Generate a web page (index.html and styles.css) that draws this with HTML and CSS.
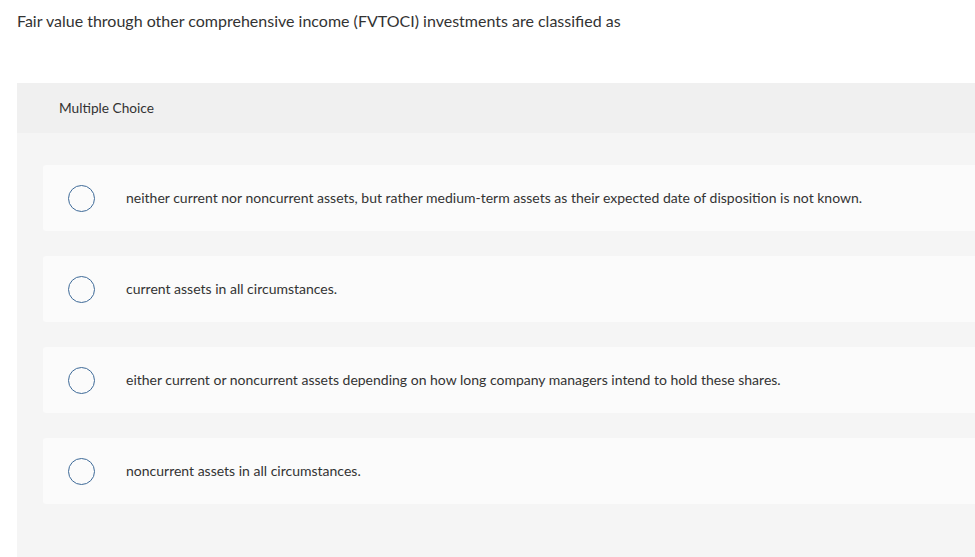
FILE: index.html
```html
<!DOCTYPE html>
<html>
<head>
<meta charset="utf-8">
<link rel="stylesheet" href="styles.css">
</head>
<body>
<div class="page">
  <p class="question">Fair value through other comprehensive income (FVTOCI) investments are classified as</p>
  <div class="panel">
    <div class="panel-header">Multiple Choice</div>
    <div class="options">
      <div class="option"><span class="radio"></span><span class="label">neither current nor noncurrent assets, but rather medium-term assets as their expected date of disposition is not known.</span></div>
      <div class="option"><span class="radio"></span><span class="label">current assets in all circumstances.</span></div>
      <div class="option"><span class="radio"></span><span class="label">either current or noncurrent assets depending on how long company managers intend to hold these shares.</span></div>
      <div class="option"><span class="radio"></span><span class="label">noncurrent assets in all circumstances.</span></div>
    </div>
  </div>
</div>
</body>
</html>
```
FILE: styles.css
```css
html, body {
  margin: 0;
  padding: 0;
  background: #ffffff;
  overflow: hidden;
}
body {
  font-family: Lato, "Open Sans", sans-serif;
  color: #333333;
}
.page {
  padding-left: 17px;
  padding-top: 11px;
}
.question {
  margin: 0;
  font-size: 16px;
  line-height: 20px;
  color: #333333;
}
.panel {
  margin-top: 52px;
  margin-right: -40px;
  background: #f5f5f5;
  height: 480px;
}
.panel-header {
  background: #f0f0f0;
  height: 50px;
  box-sizing: border-box;
  padding-bottom: 2px;
  display: flex;
  align-items: center;
  padding-left: 42px;
  font-size: 13.7px;
  color: #333333;
}
.options {
  display: flex;
  flex-direction: column;
  gap: 25px;
  padding-top: 32px;
  padding-left: 26px;
}
.option {
  background: #fbfbfb;
  border-radius: 3px;
  height: 66px;
  display: flex;
  align-items: center;
  padding-left: 25px;
}
.radio {
  width: 25px;
  height: 25px;
  border: 1.5px solid #3e6a98;
  border-radius: 50%;
  flex: none;
}
.label {
  margin-left: 31px;
  margin-bottom: 2px;
  font-size: 14px;
  color: #333333;
}
```
